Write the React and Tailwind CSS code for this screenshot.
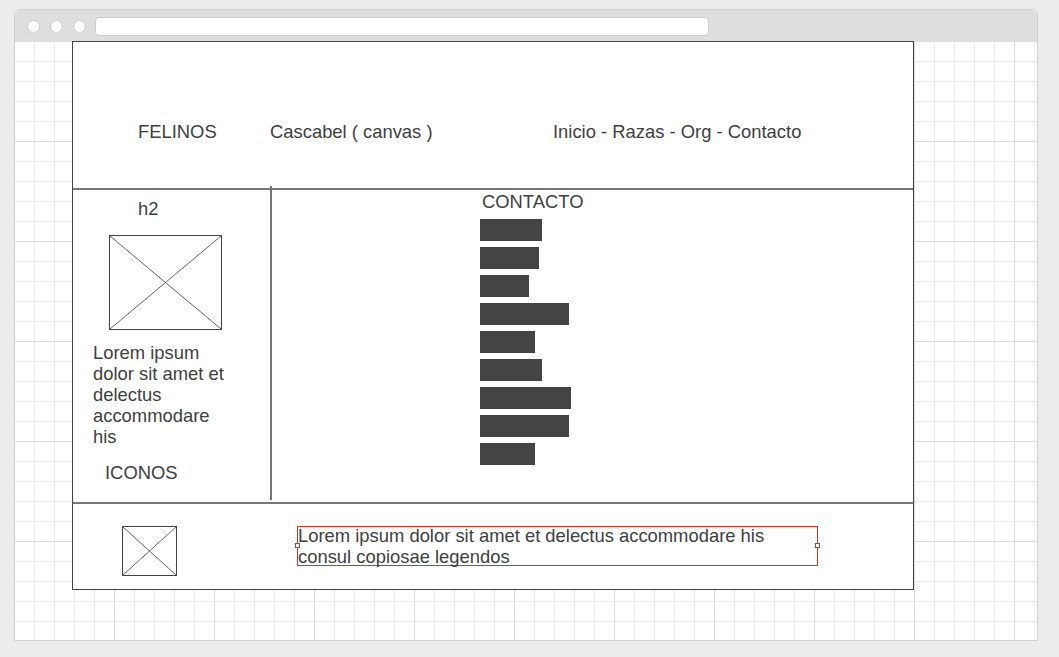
const bars = [62, 59, 49, 89, 55, 62, 91, 89, 55]

function Placeholder({ w, h }) {
  return (
    <div className="border border-[#444] bg-white" style={{ width: w, height: h }}>
      <svg width="100%" height="100%" preserveAspectRatio="none" viewBox="0 0 100 100">
        <line x1="0" y1="0" x2="100" y2="100" stroke="#666" strokeWidth="1" vectorEffect="non-scaling-stroke" />
        <line x1="100" y1="0" x2="0" y2="100" stroke="#666" strokeWidth="1" vectorEffect="non-scaling-stroke" />
      </svg>
    </div>
  )
}

export default function App() {
  return (
    <div className="h-[657px] w-[1059px] overflow-hidden bg-[#ececec] pt-[9px] pl-[14px] font-['Liberation_Sans',Arial,sans-serif] text-[18.4px] leading-[21px] text-[#404040]">
      {/* Browser window */}
      <div className="flex h-[632px] w-[1024px] flex-col rounded-t-[5px] border border-[#d0d0d0] bg-white">
        {/* Title bar */}
        <div className="flex h-[31px] shrink-0 items-center rounded-t-[5px] bg-[#dedede]">
          <div className="ml-[12px] flex gap-[10px] pt-[1px]">
            <span className="h-[13px] w-[13px] rounded-full border border-[#cfcfcf] bg-white" />
            <span className="h-[13px] w-[13px] rounded-full border border-[#cfcfcf] bg-white" />
            <span className="h-[13px] w-[13px] rounded-full border border-[#cfcfcf] bg-white" />
          </div>
          <div className="ml-[9px] mt-[1px] h-[19px] w-[614px] rounded-[4px] border border-[#cccccc] bg-white" />
        </div>

        {/* Canvas */}
        <div className="flex-1 bg-[linear-gradient(#dddddd_1px,transparent_1px),linear-gradient(90deg,#dddddd_1px,transparent_1px),linear-gradient(#ebebeb_1px,transparent_1px),linear-gradient(90deg,#ebebeb_1px,transparent_1px)] bg-size-[100px_100px,100px_100px,20px_20px,20px_20px] bg-position-[-1px_0]">
          <div className="ml-[57px] flex h-[549px] w-[842px] flex-col border border-[#444] bg-white">
            {/* Header */}
            <div className="flex h-[148px] shrink-0 border-b-2 border-[#777] pt-[79px] pl-[65px]">
              <span className="w-[132px]">FELINOS</span>
              <span className="w-[283px]">Cascabel ( canvas )</span>
              <span>Inicio - Razas - Org - Contacto</span>
            </div>

            {/* Middle */}
            <div className="flex h-[314px] shrink-0 border-b-2 border-[#777]">
              <div className="flex w-[197px] flex-col pt-[8px]">
                <span className="ml-[65px]">h2</span>
                <div className="ml-[36px] mt-[16px]">
                  <Placeholder w={113} h={95} />
                </div>
                <p className="ml-[20px] mt-[12px] w-[135px]">
                  Lorem ipsum dolor sit amet et delectus accommodare his
                </p>
                <span className="ml-[32px] mt-[15px]">ICONOS</span>
              </div>
              <div className="relative -mt-[4px] h-[314px] w-[2px] shrink-0 self-start bg-[#777]" />
              <div className="flex flex-1 flex-col pt-[1px] pl-[208px]">
                <span className="ml-[2px]">CONTACTO</span>
                <div className="mt-[7px] flex flex-col gap-[6px]">
                  {bars.map((w, i) => (
                    <div key={i} className="h-[22px] bg-[#444]" style={{ width: w }} />
                  ))}
                </div>
              </div>
            </div>

            {/* Footer */}
            <div className="flex flex-1 items-start pt-[22px] pl-[49px]">
              <Placeholder w={55} h={50} />
              <div className="relative ml-[120px] h-[40px] w-[521px] border border-[#d9311c]">
                <p className="-mt-[2px]">
                  Lorem ipsum dolor sit amet et delectus accommodare his
                  <br />
                  consul copiosae legendos
                </p>
                <span className="absolute -left-[3px] top-[16px] h-[5px] w-[5px] border border-[#d9311c] bg-white" />
                <span className="absolute -right-[3px] top-[16px] h-[5px] w-[5px] border border-[#d9311c] bg-white" />
              </div>
            </div>
          </div>
        </div>
      </div>
    </div>
  )
}
